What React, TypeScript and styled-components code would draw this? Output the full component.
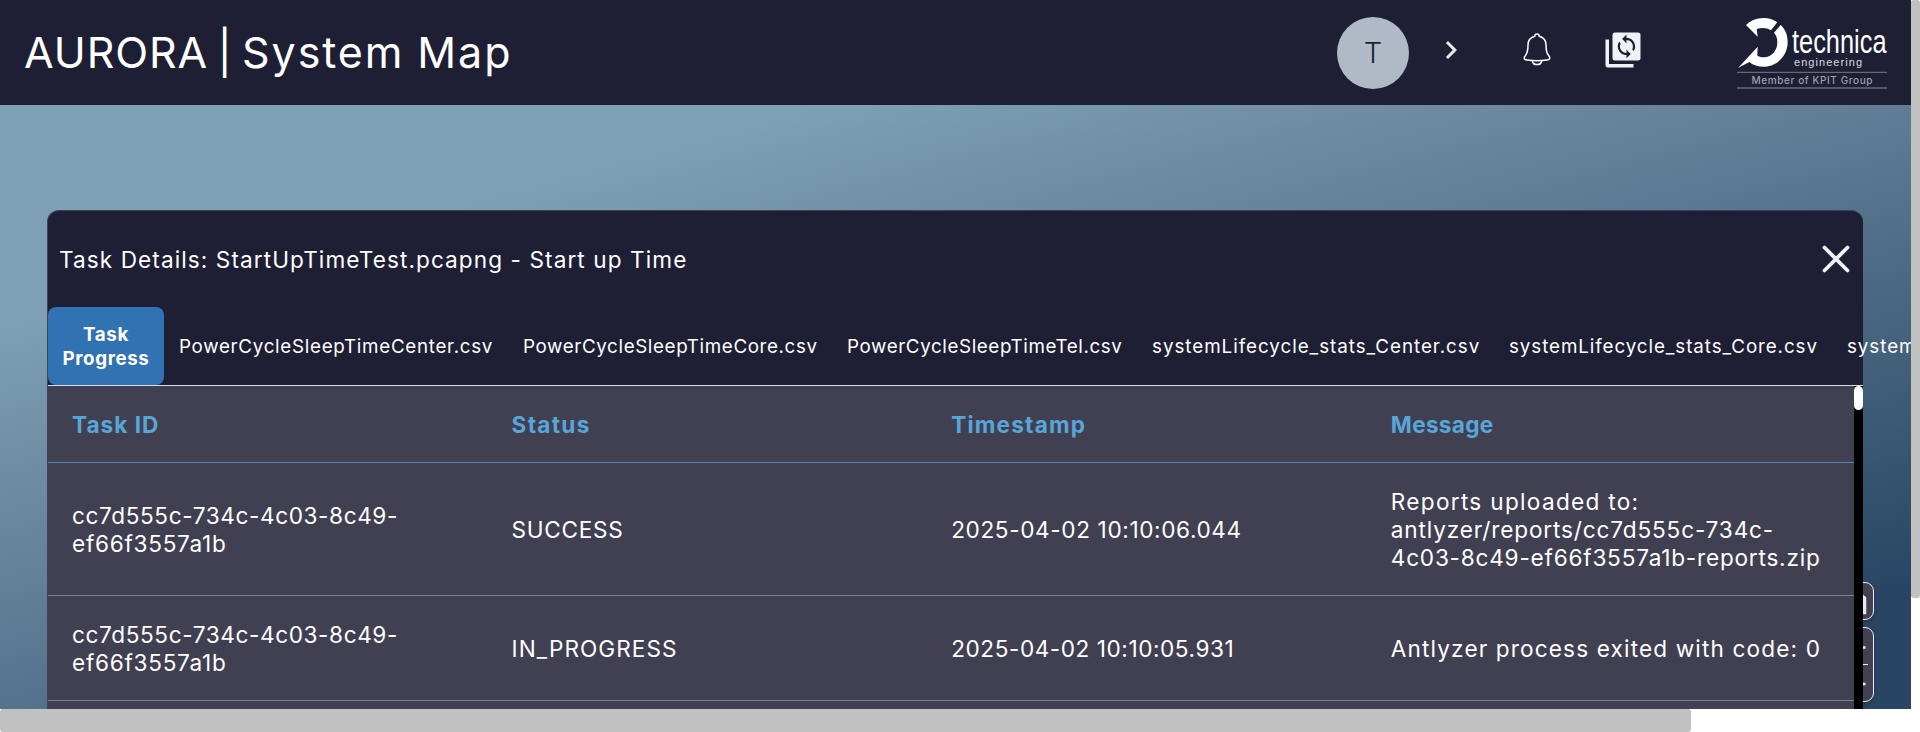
import React from 'react';
import styled, { createGlobalStyle } from 'styled-components';

const GlobalStyle = createGlobalStyle`
  * { box-sizing: border-box; }
  body {
    margin: 0;
    overflow: hidden;
    background: #fff;
    font-family: Inter, 'Liberation Sans', sans-serif;
    color: #fff;
  }
`;

const Window = styled.div`
  display: grid;
  grid-template: 709px 23px / 1911px 9px;
  width: 1920px;
  height: 732px;
`;

const Viewport = styled.div`
  position: relative;
  display: flex;
  flex-direction: column;
  overflow: hidden;
  background: linear-gradient(165deg, #7f9fb4 0, #7f9fb4 315px, #2a4563 1060px);
`;

const ScrollThumb = styled.div<{ $axis: 'x' | 'y' }>`
  width: ${(p) => (p.$axis === 'x' ? '1691px' : '9px')};
  height: ${(p) => (p.$axis === 'x' ? '23px' : '598px')};
  border-radius: 3px;
  background: #c1c1c1;
`;

const Header = styled.header`
  display: flex;
  align-items: center;
  flex: 0 0 105px;
  padding: 0 23px 0 24px;
  background: #1e1e35;
`;

const Title = styled.h1`
  flex: 1;
  margin: 0 0 2px;
  font-size: 43px;
  font-weight: 400;
  line-height: 54px;
  white-space: pre;
`;

const TitlePart = styled.span<{ $track: number; $gap: number }>`
  letter-spacing: ${(p) => p.$track}px;
  word-spacing: ${(p) => p.$gap}px;
`;

const Avatar = styled.div`
  display: flex;
  align-items: center;
  justify-content: center;
  width: 72px;
  height: 72px;
  margin-right: 24px;
  border-radius: 50%;
  background: #b0bac6;
  color: #1e1e35;
  font-size: 29px;
  font-weight: 300;
`;

const HeaderIcon = styled.svg<{ $gap: number }>`
  flex: none;
  margin: 0 ${(p) => p.$gap}px 6px 0;
`;

const Logo = styled.svg`
  flex: none;
  overflow: visible;
`;

const Stage = styled.main`
  padding: 105px 47px 0;
`;

const Panel = styled.section`
  position: relative;
  z-index: 1;
  width: 1816px;
  height: 800px;
  border: 1px solid #3d4358;
  border-right: 0;
  border-radius: 12px 12px 0 0;
  background: #1e1e35;
`;

const PanelHead = styled.div`
  display: flex;
  align-items: center;
  justify-content: space-between;
  height: 96px;
  padding: 0 13px 0 11px;
`;

const PanelTitle = styled.h2`
  margin: 2px 0 0;
  font-size: 22.6px;
  font-weight: 400;
  line-height: 28px;
  letter-spacing: 1.08px;
`;

const CloseButton = styled.button`
  display: flex;
  padding: 0;
  border: 0;
  background: none;
`;

const TabBar = styled.nav`
  display: flex;
  height: 79px;
  border-bottom: 1px solid #dcdce2;
`;

const Tab = styled.div<{ $width: number; $track: number; $active?: boolean }>`
  display: flex;
  flex: 0 0 ${(p) => p.$width}px;
  flex-direction: column;
  justify-content: center;
  align-items: ${(p) => (p.$active ? 'center' : 'flex-start')};
  padding: 2px 0 0 ${(p) => (p.$active ? 0 : 15)}px;
  border-radius: 8px;
  background: ${(p) => (p.$active ? '#3072b2' : 'transparent')};
  font-size: 18.8px;
  font-weight: ${(p) => (p.$active ? 700 : 400)};
  line-height: 24px;
  letter-spacing: ${(p) => p.$track}px;
  white-space: nowrap;
`;

const Body = styled.div`
  display: flex;
  height: 620px;
  background: #414052;
`;

const Table = styled.div`
  flex: 1;
`;

const Row = styled.div<{ $head?: boolean }>`
  display: grid;
  grid-template-columns: repeat(4, 439.6px);
  align-items: center;
  padding: 25px 24px 23px;
  border-bottom: 1px solid ${(p) => (p.$head ? '#4c86b0' : '#82828e')};
  color: ${(p) => (p.$head ? '#58a6d8' : '#fff')};
  font-weight: ${(p) => (p.$head ? 700 : 400)};
`;

const Line = styled.div<{ $track: number }>`
  font-size: 22.6px;
  line-height: 28px;
  letter-spacing: ${(p) => p.$track}px;
  white-space: nowrap;
`;

const PanelScroll = styled.div`
  width: 9px;
  background: #000;
`;

const PanelScrollThumb = styled.div`
  height: 24px;
  border-radius: 5px;
  background: #fff;
`;

const MapControls = styled.div`
  position: absolute;
  right: 37px;
  bottom: 7px;
  display: flex;
  flex-direction: column;
  gap: 7px;
`;

const ControlGroup = styled.div<{ $height: number }>`
  width: 40px;
  height: ${(p) => p.$height}px;
  border: 1px solid #f0f0f2;
  border-radius: 9px;
  background: #424153;
  box-shadow: 0 2px 4px rgba(0, 0, 0, 0.25);
`;

type TextLine = [text: string, track: number];

const tabs: { label: string; width: number; track: number }[] = [
  { label: 'PowerCycleSleepTimeCenter.csv', width: 344, track: 0.7 },
  { label: 'PowerCycleSleepTimeCore.csv', width: 324, track: 0.62 },
  { label: 'PowerCycleSleepTimeTel.csv', width: 305, track: 0.6 },
  { label: 'systemLifecycle_stats_Center.csv', width: 357, track: 0.97 },
  { label: 'systemLifecycle_stats_Core.csv', width: 338, track: 0.92 },
  { label: 'systemLifecycle_stats_Tel.csv', width: 320, track: 0.95 },
];

const columns: TextLine[] = [
  ['Task ID', 1.0],
  ['Status', 1.3],
  ['Timestamp', 1.2],
  ['Message', 0.3],
];

const taskId: TextLine[] = [
  ['cc7d555c-734c-4c03-8c49-', 0.6],
  ['ef66f3557a1b', 0.72],
];

const rows: TextLine[][][] = [
  [
    taskId,
    [['SUCCESS', 0.7]],
    [['2025-04-02 10:10:06.044', 0.62]],
    [
      ['Reports uploaded to:', 1.3],
      ['antlyzer/reports/cc7d555c-734c-', 0.84],
      ['4c03-8c49-ef66f3557a1b-reports.zip', 0.78],
    ],
  ],
  [
    taskId,
    [['IN_PROGRESS', 1.05]],
    [['2025-04-02 10:10:05.931', 0.55]],
    [['Antlyzer process exited with code: 0', 1.14]],
  ],
];

const SYNC =
  'M12 4V1L8 5l4 4V6c3.31 0 6 2.69 6 6 0 1.01-.25 1.97-.7 2.8l1.46 1.46C19.54 15.03 20 13.57 20 12c0-4.42-3.58-8-8-8zm0 14c-3.31 0-6-2.69-6-6 0-1.01.25-1.97.7-2.8L5.24 7.74C4.46 8.97 4 10.43 4 12c0 4.42 3.58 8 8 8v3l4-4-4-4v3z';

function CompanyLogo() {
  return (
    <Logo width="152" height="85" viewBox="0 0 152 85">
      <g fill="#fff" transform="translate(-6 0) scale(.33333)">
        <path d="M48 45Q69 24 100 24Q124 24 142 37L123 61Q104 49 80 57L83 80Z" />
        <path d="M152 45C167 59 173 76 173 97C173 138 140 170 101 170C84 170 70 166 58 156L24 174L83 110L82 137C89 141 95 142 102 142C126 142 142 121 142 97C142 85 139 76 132 68Z" />
      </g>
      <g fill="#fff" fontFamily="'Liberation Sans Narrow', 'Liberation Sans', sans-serif">
        <text x="56" y="43.4" fontSize="34" textLength="94.5" lengthAdjust="spacingAndGlyphs">technica</text>
        <text x="58" y="56" fontSize="11" textLength="68" fillOpacity=".85">engineering</text>
      </g>
      <path d="M1 62.3h150M1 78h150" stroke="#686878" strokeWidth="1.3" />
      <text x="15.500" y="74" fill="#a09fac" fontSize="10" fontWeight="500" textLength="121">
        Member of KPIT Group
      </text>
    </Logo>
  );
}

export default function App() {
  return (
    <>
      <GlobalStyle />
      <Window>
        <Viewport>
          <Header>
            <Title>
              <TitlePart $track={0.9} $gap={-3.6}>{'AURORA | '}</TitlePart>
              <TitlePart $track={1.9} $gap={-1}>System Map</TitlePart>
            </Title>
            <Avatar>T</Avatar>
            <HeaderIcon $gap={54} width="36" height="36" viewBox="0 0 24 24" fill="#e8e8e8">
              <path d="M10 6 8.59 7.41 13.17 12l-4.58 4.59L10 18l6-6z" />
            </HeaderIcon>
            <HeaderIcon $gap={54} width="28" height="34" viewBox="0 0 28 34" fill="none" stroke="#fff" strokeWidth="1.5">
              <path d="M11.800 3.200a2.200 2.200 0 0 1 4.400 0C20.300 4.300 23 7.600 23 12c0 6 .7 8.300 2.600 10.600 2 2.500 1.300 4.400-1.600 4.400C17.500 28 10.500 28 4 27c-2.900 0-3.600-1.900-1.600-4.400C4.300 20.300 5 18 5 12c0-4.400 2.700-7.700 6.800-8.800Z" />
              <path d="M9.200 28a4.900 4.500 0 0 0 9.600 0" />
            </HeaderIcon>
            <HeaderIcon $gap={95} width="36" height="36" viewBox="0 0 36 36" fill="#f0f1f4">
              <path d="M.500 7.500h3.500V32H28.500v3.500H3a2.500 2.500 0 0 1-2.500-2.500Z" />
              <rect x="7.500" y=".500" width="28" height="28" rx="2.500" />
              <path d={SYNC} fill="#1e1e35" transform="translate(8.500 1.500) scale(1.080)" />
            </HeaderIcon>
            <CompanyLogo />
          </Header>
          <Stage>
            <Panel>
              <PanelHead>
                <PanelTitle>Task Details: StartUpTimeTest.pcapng - Start up Time</PanelTitle>
                <CloseButton aria-label="Close">
                  <svg width="28" height="28" viewBox="0 0 28 28" stroke="#f2f2f5" strokeWidth="3.8" strokeLinecap="round">
                    <path d="M2.500 2.500l23 23M25.500 2.500l-23 23" />
                  </svg>
                </CloseButton>
              </PanelHead>
              <TabBar>
                <Tab $active $width={116} $track={0.6}>
                  <span>Task</span>
                  <span>Progress</span>
                </Tab>
                {tabs.map((t) => (
                  <Tab key={t.label} $width={t.width} $track={t.track}>
                    {t.label}
                  </Tab>
                ))}
              </TabBar>
              <Body>
                <Table>
                  <Row $head>
                    {columns.map(([text, track]) => (
                      <Line key={text} $track={track}>{text}</Line>
                    ))}
                  </Row>
                  {rows.map((cells, r) => (
                    <Row key={r}>
                      {cells.map((lines, c) => (
                        <div key={c}>
                          {lines.map(([text, track]) => (
                            <Line key={text} $track={track}>{text}</Line>
                          ))}
                        </div>
                      ))}
                    </Row>
                  ))}
                </Table>
                <PanelScroll>
                  <PanelScrollThumb />
                </PanelScroll>
              </Body>
            </Panel>
          </Stage>
          <MapControls>
            <ControlGroup $height={38}>
              <svg width="38" height="36" viewBox="0 0 38 36" fill="none" stroke="#e8e8ea" strokeWidth="3.500">
                <path d="M10 13h17l2.500 2v14.500H10Z" />
              </svg>
            </ControlGroup>
            <ControlGroup $height={75}>
              <svg width="38" height="73" viewBox="0 0 38 73" fill="none" stroke="#f0f0f2" strokeWidth="2.500">
                <path d="M8 19.500h22.500M19.500 10v19M8 56h22.500" />
                <path d="M6 36.500h27" strokeWidth="1" />
              </svg>
            </ControlGroup>
          </MapControls>
        </Viewport>
        <div>
          <ScrollThumb $axis="y" />
        </div>
        <div>
          <ScrollThumb $axis="x" />
        </div>
      </Window>
    </>
  );
}
